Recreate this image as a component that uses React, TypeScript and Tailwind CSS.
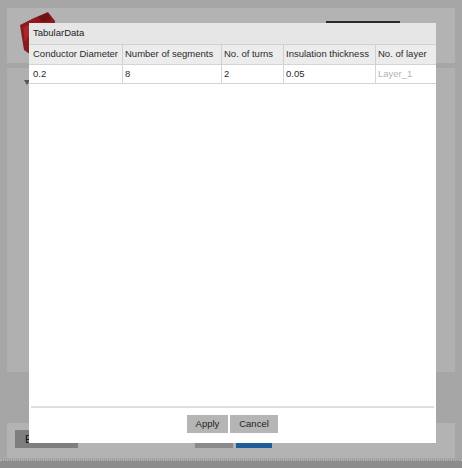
import React from "react";

const columns = [
	{ label: "Conductor Diameter", value: "0.2", w: "w-[93px]" },
	{ label: "Number of segments", value: "8", w: "w-[99px]" },
	{ label: "No. of turns", value: "2", w: "w-[62px]" },
	{ label: "Insulation thickness", value: "0.05", w: "w-[92px]" },
	{ label: "No. of layer", value: "Layer_1", w: "w-[61px]", muted: true },
];

const RedLogo = () => (
	<svg width="36" height="44" viewBox="0 0 36 44" className="mt-[4px] ml-[13px]">
		<polygon
			points="0,13 14,6 28,0 35,9 34,22 30,30 14,33 11,43 4,38 2,26"
			fill="#8c1a1d"
		/>
		<polygon points="3,16 12,11 10,22 5,30" fill="#a5282b" />
		<polygon points="18,5 28,1 31,8 22,10" fill="#6f1215" />
	</svg>
);

export default function App() {
	return (
		<div className="relative w-[462px] h-[468px] overflow-hidden bg-[#a6a6a6] font-['Liberation_Sans',Arial,sans-serif] text-[9.5px] text-[#2b2b2b]">
			{/* background page */}
			<div className="flex flex-col h-full pt-[8px]">
				<div className="mx-[7px] h-[55px] bg-[#b3b3b3] flex items-start">
					<RedLogo />
					<div className="ml-auto mr-[55px] mt-[13px] w-[74px] h-[3px] bg-[#2a2a2a]" />
				</div>
				<div className="mx-[7px] mt-[5px] h-[304px] bg-[#b0b0b0] pl-[17px] pt-[12px]">
					<svg width="6" height="5" viewBox="0 0 6 5">
						<polygon points="0,0 6,0 3,5" fill="#555" />
					</svg>
				</div>
				<div className="mx-[7px] mt-[51px] h-[35px] bg-[#b3b3b3] flex items-start pt-[7px] pl-[8px]">
					<div className="w-[63px] h-[18px] bg-[#7e7e7e] pl-[10px] flex items-center text-[11px] text-[#111]">
						E
					</div>
					<div className="ml-[117px] w-[38px] h-[18px] bg-[#8a8a8a]" />
					<div className="ml-[3px] w-[36px] h-[18px] bg-[#1e5e98]" />
				</div>
				<div className="mt-auto h-[8px] bg-[#8c8c8c] border-t border-dotted border-[#b8b8b8]" />
			</div>

			{/* modal */}
			<div className="absolute left-[29px] top-[23px] w-[407px] h-[420px] bg-white flex flex-col">
				<div className="h-[21px] bg-[#e6e6e6] pl-[4px] flex items-center text-[#222]">
					TabularData
				</div>
				<div className="flex h-[20px] bg-[#ececec] border-t border-[#d2d2d2]">
					{columns.map((c, i) => (
						<div
							key={c.label}
							className={`${c.w} flex items-center whitespace-nowrap text-[#2a2a2a] ${
								i === 0 ? "pl-[4px]" : "pl-[2px] border-l border-[#d0d0d0]"
							}`}
						>
							{c.label}
						</div>
					))}
				</div>
				<div className="flex h-[20px] bg-white border-t border-b border-[#d4d4d4]">
					{columns.map((c, i) => (
						<div
							key={c.label}
							className={`${c.w} flex items-center ${
								c.muted ? "text-[#b4b4b4]" : "text-[#2a2a2a]"
							} ${i === 0 ? "pl-[4px]" : "pl-[2px] border-l border-[#d6d6d6]"}`}
						>
							{c.value}
						</div>
					))}
				</div>
				<div className="flex-1" />
				<div className="mx-[2px] h-[2px] bg-[#dedede]" />
				<div className="h-[35px] flex justify-center items-start gap-[2px] pt-[7px]">
					<button type="button" className="w-[41px] h-[18px] bg-[#b5b5b5] text-[#222]">
						Apply
					</button>
					<button type="button" className="w-[48px] h-[18px] bg-[#b5b5b5] text-[#222]">
						Cancel
					</button>
				</div>
			</div>
		</div>
	);
}
